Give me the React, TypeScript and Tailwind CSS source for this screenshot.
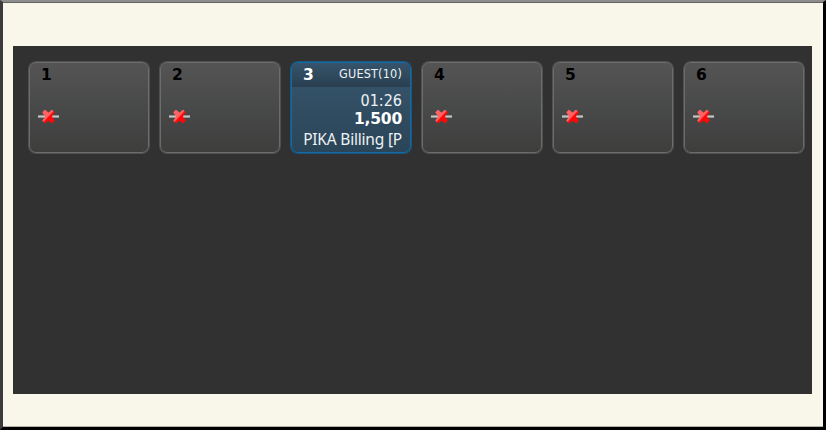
type Station = {
  id: number;
  session?: { user: string; time: string; cost: string; app: string };
};

const stations: Station[] = [
  { id: 1 },
  { id: 2 },
  { id: 3, session: { user: "GUEST(10)", time: "01:26", cost: "1,500", app: "PIKA Billing [P" } },
  { id: 4 },
  { id: 5 },
  { id: 6 },
];

function DisconnectedIcon() {
  return (
    <svg width="23" height="16" viewBox="0 -0.5 23 16" className="block" aria-hidden="true">
      <defs>
        <linearGradient id="cross" x1="0" y1="0" x2="1" y2="1">
          <stop offset="0.46" stopColor="#ff6262" />
          <stop offset="0.54" stopColor="#ff0808" />
        </linearGradient>
      </defs>
      <path d="M1 6.5h21v3H1z" fill="#777" opacity="0.6" />
      <path d="M1 7h21v2H1z" fill="#c3c5c3" />
      <path
        d="M8 2 11.5 5 15 2 17 4 14.2 8 17 12 15 14 11.5 11.3 8 14 6 12 8.8 8 6 4Z"
        fill="url(#cross)"
        stroke="url(#cross)"
        strokeWidth="1.3"
        strokeLinejoin="round"
      />
    </svg>
  );
}

function IdleCard({ id }: { id: number }) {
  return (
    <div className="h-[91px] w-[120px] rounded-[7px] border border-[#6c6c6c] bg-linear-to-b from-[#555455] via-[#484949] to-[#3e3e3d] shadow-[0_0_0_1px_#505050]">
      <div className="h-[45px] pt-[3px] pl-[11px] text-[15.5px] leading-[18px] font-bold text-black">{id}</div>
      <div className="pl-[7px]">
        <DisconnectedIcon />
      </div>
    </div>
  );
}

function ActiveCard({ id, session }: { id: number; session: NonNullable<Station["session"]> }) {
  return (
    <div className="h-[91px] w-[120px] overflow-hidden rounded-[7px] border border-[#126ba6] bg-linear-to-b from-[#37566d] to-[#2b4558] text-right text-[#eef2f4] shadow-[0_0_0_1px_#1d557c]">
      <div className="flex h-[24px] items-start justify-between bg-linear-to-b from-[#36546b] to-[#293f50] pr-[8px] pl-[11px]">
        <span className="pt-[3px] text-[15.5px] leading-[18px] font-bold text-white">{id}</span>
        <span className="pt-[2px] font-['DejaVu_Sans_Condensed','DejaVu_Sans',sans-serif] text-[12.5px] leading-[18px] tracking-[0.2px] [font-stretch:condensed]">
          {session.user}
        </span>
      </div>
      <div className="pt-[4px] pr-[8px] font-['DejaVu_Sans_Condensed','DejaVu_Sans',sans-serif] text-[16px] leading-[20px] [font-stretch:condensed]">
        {session.time}
      </div>
      <div className="pr-[8px] text-[15.5px] leading-[17px] font-bold tracking-[-0.2px] text-white">{session.cost}</div>
      <div className="pt-px pr-[8px] font-['Noto_Sans',sans-serif] text-[15.5px] leading-[20px] tracking-[-0.2px] whitespace-nowrap">
        {session.app}
      </div>
    </div>
  );
}

export default function App() {
  return (
    <main className="h-[430px] w-[826px] overflow-hidden border-t-2 border-r-3 border-b-3 border-l-3 border-t-[#8d8d8d] border-r-black border-b-black border-l-[#3b3a3d] bg-[#f9f7e9] pt-[44px] pl-[10px] font-['DejaVu_Sans',sans-serif] shadow-[inset_0_1px_0_#66635f,inset_0_-1px_0_#b3b1a8]">
      <section className="flex h-[348px] w-[799px] items-start gap-[11px] bg-[#313131] pt-[16px] pl-[16px]">
        {stations.map((s) =>
          s.session ? <ActiveCard key={s.id} id={s.id} session={s.session} /> : <IdleCard key={s.id} id={s.id} />,
        )}
      </section>
    </main>
  );
}
